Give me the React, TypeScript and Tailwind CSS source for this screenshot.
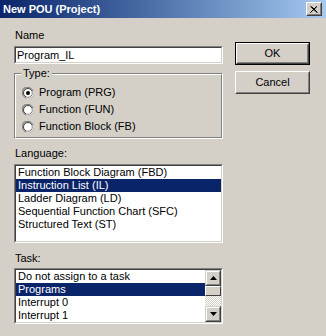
import React from "react";

const sunken =
  "border-t-[#808080] border-l-[#808080] border-b-white border-r-white border";
const sunkenInner =
  "border border-t-[#404040] border-l-[#404040] border-b-[#d4d0c8] border-r-[#d4d0c8]";

function Radio({ checked, label }: { checked?: boolean; label: string }) {
  return (
    <div className="flex items-center h-[17px]">
      <svg width="12" height="12" viewBox="0 0 12 12" className="shrink-0">
        <path d="M1 8 A5 5 0 0 1 8 1" stroke="#808080" strokeWidth="1" fill="none" />
        <circle cx="6" cy="6" r="5.5" fill="none" stroke="#808080" />
        <circle cx="6" cy="6" r="4.5" fill="#ffffff" stroke="#404040" />
        <path d="M11 4 A5.5 5.5 0 0 1 4 11" stroke="#ffffff" strokeWidth="1" fill="none" />
        <path d="M10 5 A4.5 4.5 0 0 1 5 10" stroke="#d4d0c8" strokeWidth="1" fill="none" />
        {checked && <circle cx="6" cy="6" r="2" fill="#000" />}
      </svg>
      <span className="ml-[5px] leading-[13px]">{label}</span>
    </div>
  );
}

function Button({ label, def }: { label: string; def?: boolean }) {
  return (
    <div className={`w-[75px] h-[23px] ${def ? "border border-black" : ""}`}>
      <div className="w-full h-full border border-t-white border-l-white border-b-[#404040] border-r-[#404040]">
        <div className="w-full h-full border border-t-[#d4d0c8] border-l-[#d4d0c8] border-b-[#808080] border-r-[#808080] flex items-center justify-center leading-[13px]">
          {label}
        </div>
      </div>
    </div>
  );
}

function ListRow({ text, sel }: { text: string; sel?: boolean }) {
  return (
    <div
      className={`h-[13px] leading-[13px] pl-[2px] whitespace-nowrap ${
        sel ? "bg-[#0a246a] text-white" : ""
      }`}
    >
      {text}
    </div>
  );
}

function ScrollBtn({ up }: { up?: boolean }) {
  return (
    <div className="w-[16px] h-[16px] bg-[#d4d0c8] border border-t-[#d4d0c8] border-l-[#d4d0c8] border-b-[#404040] border-r-[#404040]">
      <div className="w-full h-full border border-t-white border-l-white border-b-[#808080] border-r-[#808080] flex items-center justify-center">
        <svg width="7" height="4" viewBox="0 0 7 4">
          {up ? (
            <path d="M3.5 0 L7 4 L0 4 Z" fill="#000" />
          ) : (
            <path d="M0 0 L7 0 L3.5 4 Z" fill="#000" />
          )}
        </svg>
      </div>
    </div>
  );
}

export default function App() {
  return (
    <div className="w-[326px] h-[336px] bg-[#d4d0c8] text-black text-[11px] font-['Liberation_Sans',Arial,sans-serif] overflow-hidden">
      {/* title bar */}
      <div className="h-[18px] flex items-center justify-between pl-[3px] pr-[4px] bg-gradient-to-r from-[#0a246a] to-[#a6caf0]">
        <span className="text-white font-bold text-[11px] leading-[13px]">New POU (Project)</span>
        <div className="w-[16px] h-[14px] border border-t-white border-l-white border-b-[#404040] border-r-[#404040] bg-[#d4d0c8]">
          <div className="w-full h-full border border-t-[#d4d0c8] border-l-[#d4d0c8] border-b-[#808080] border-r-[#808080] flex items-center justify-center">
            <svg width="8" height="7" viewBox="0 0 8 7">
              <path d="M0.5 0.5 L7 6.5 M1.5 0.5 L7.5 6.5 M7 0.5 L0.5 6.5 M6.5 0.5 L0.5 6.5" stroke="#000" strokeWidth="1" />
            </svg>
          </div>
        </div>
      </div>

      <div className="flex pl-[14px] pt-[11px] gap-[12px]">
        {/* left column */}
        <div className="w-[209px] flex flex-col">
          <div className="leading-[13px] pl-[1px]">Name</div>
          <div className={`mt-[4px] h-[18px] ${sunken}`}>
            <div className={`h-full bg-white ${sunkenInner} leading-[13px] pl-[1px] pt-[1px]`}>
              Program_IL
            </div>
          </div>

          {/* Type group */}
          <div className="relative mt-[9px] h-[66px] border border-t-[#808080] border-l-[#808080] border-b-white border-r-white">
            <div className="absolute inset-0 border border-t-white border-l-white border-b-[#808080] border-r-[#808080]" />
            <div className="absolute left-[6px] top-[-7px] px-[2px] bg-[#d4d0c8] leading-[13px]">Type:</div>
            <div className="relative pt-[10px] pl-[7px] flex flex-col">
              <Radio checked label="Program (PRG)" />
              <Radio label="Function (FUN)" />
              <Radio label="Function Block (FB)" />
            </div>
          </div>

          <div className="mt-[8px] leading-[13px] pl-[1px]">Language:</div>
          <div className={`mt-[4px] h-[79px] ${sunken}`}>
            <div className={`h-full bg-white ${sunkenInner}`}>
              <ListRow text="Function Block Diagram (FBD)" />
              <ListRow text="Instruction List (IL)" sel />
              <ListRow text="Ladder Diagram (LD)" />
              <ListRow text="Sequential Function Chart (SFC)" />
              <ListRow text="Structured Text (ST)" />
            </div>
          </div>

          <div className="mt-[9px] leading-[13px] pl-[1px]">Task:</div>
          <div className={`mt-[3px] h-[56px] ${sunken}`}>
            <div className={`h-full bg-white ${sunkenInner} flex`}>
              <div className="flex-1 min-w-0 overflow-hidden">
                <ListRow text="Do not assign to a task" />
                <ListRow text="Programs" sel />
                <ListRow text="Interrupt 0" />
                <ListRow text="Interrupt 1" />
              </div>
              <div className="w-[16px] flex flex-col">
                <ScrollBtn up />
                <div className="h-[10px] border border-t-white border-l-white border-b-[#404040] border-r-[#404040] bg-[#d4d0c8]" />
                <div className="flex-1 bg-[repeating-conic-gradient(#ffffff_0_25%,#d4d0c8_0_50%)] bg-[length:2px_2px]" />
                <ScrollBtn />
              </div>
            </div>
          </div>
        </div>

        {/* right column */}
        <div className="w-[75px] flex flex-col pt-[13px] gap-[6px]">
          <Button label="OK" def />
          <Button label="Cancel" />
        </div>
      </div>
    </div>
  );
}
